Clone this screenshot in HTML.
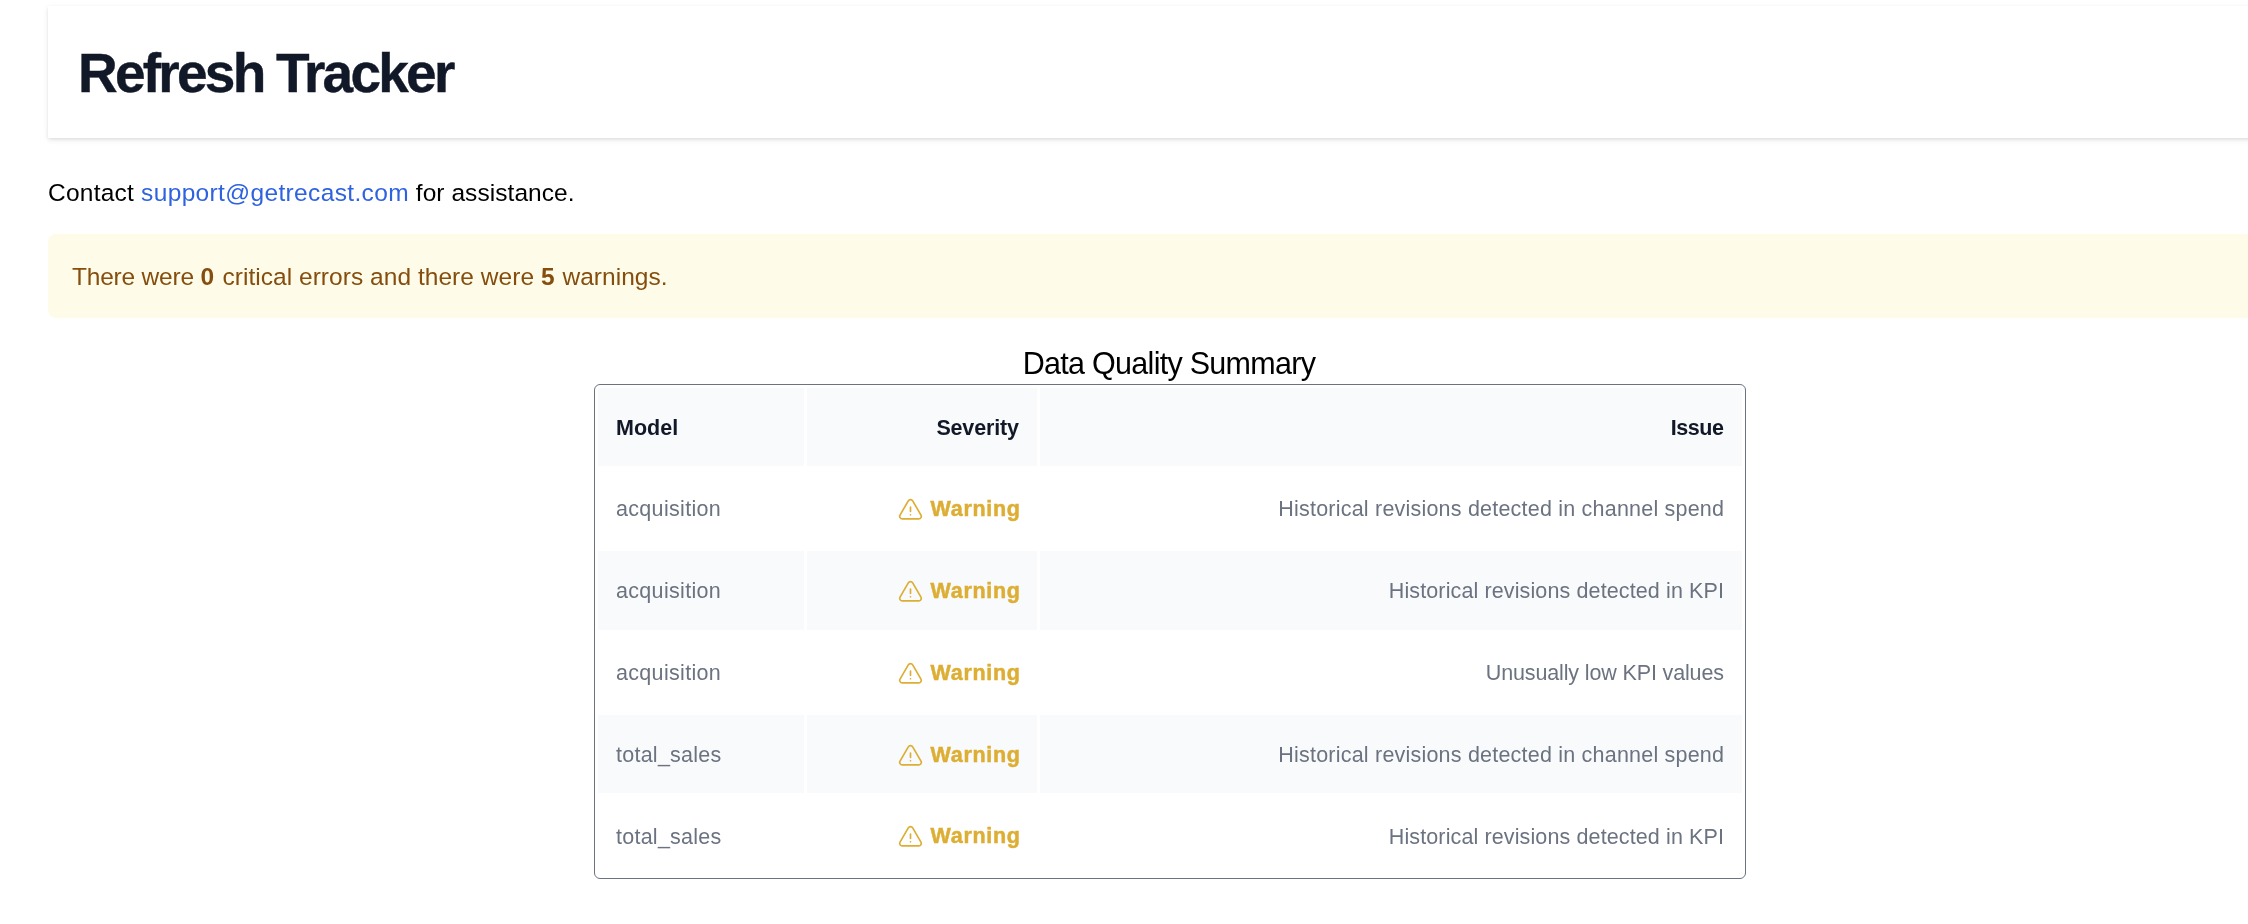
<!DOCTYPE html>
<html>
<head>
<meta charset="utf-8">
<style>
html,body{margin:0;padding:0;background:#fff;width:2248px;height:924px;overflow:hidden;}
body{font-family:"Liberation Sans",sans-serif;position:relative;-webkit-font-smoothing:antialiased;}
.gs{position:absolute;left:0;top:0;width:2248px;height:924px;will-change:transform;}
.card{position:absolute;left:48px;top:6px;width:2400px;height:132px;background:#fff;
  box-shadow:0 2px 5px 0 rgba(0,0,0,0.10),0 1px 3px 0 rgba(0,0,0,0.06);}
.title{position:absolute;left:30px;top:35px;font-size:55px;letter-spacing:-2.75px;-webkit-text-stroke:0.4px #111827;font-weight:700;color:#111827;white-space:nowrap;line-height:64px;}
.contact{position:absolute;left:48px;top:177.5px;font-size:24.5px;letter-spacing:0.23px;color:#000;white-space:nowrap;line-height:30px;}
.contact a{color:#2f62e0;text-decoration:none;letter-spacing:0.35px;}
.contact .c2{letter-spacing:0.06px;}
.alert{position:absolute;left:48px;top:234px;width:2400px;height:84px;background:#fefce8;border-radius:8px;}
.alert span.t{position:absolute;left:24px;top:27.5px;font-size:24.5px;letter-spacing:0.04px;color:#854d0e;white-space:nowrap;line-height:30px;}
.caption{position:absolute;left:0;width:2338px;top:346px;text-align:center;font-size:30.5px;letter-spacing:-0.72px;color:#000;line-height:34px;white-space:nowrap;}
.tbl{position:absolute;left:594px;top:384px;width:1152px;height:495px;box-sizing:border-box;border:1px solid #6b7280;border-radius:6px;}
.cell{position:absolute;box-sizing:border-box;white-space:nowrap;}
.cell .in{position:absolute;left:18px;right:18px;}
.r .in{text-align:right;}
.hd{background:#f9fafb;font-weight:700;color:#111827;font-size:21.5px;}
.gr{background:#f9fafb;}
.dt{color:#6b7280;font-size:21.5px;}
.warn{position:relative;display:inline-block;color:#ddae34;font-weight:700;font-size:21.5px;-webkit-text-stroke:0.5px currentColor;letter-spacing:0.7px;margin-right:-1.7px;}
.warn svg{position:absolute;left:-34px;top:27px;}
</style>
</head>
<body><div class="gs">
<div class="card"><div class="title">Refresh Tracker</div></div>
<div class="contact">Contact <a>support@getrecast.com</a><span class="c2"> for assistance.</span></div>
<div class="alert"><span class="t"><span style="letter-spacing:-0.2px">There were </span><b style="letter-spacing:1.4px">0</b> critical errors and there were <b style="letter-spacing:1px">5</b> warnings.</span></div>
<div class="caption">Data Quality Summary</div>
<div class="tbl">
<div class="cell hd" style="left:3px;top:3px;width:206px;height:78px"><div class="in" style="top:1.0px;line-height:78px"><span style="letter-spacing:0.0px">Model</span></div></div>
<div class="cell hd r" style="left:212px;top:3px;width:230px;height:78px"><div class="in" style="top:1.0px;line-height:78px"><span style="letter-spacing:-0.15px;margin-right:0.15px">Severity</span></div></div>
<div class="cell hd r" style="left:445px;top:3px;width:702px;height:78px"><div class="in" style="top:1.0px;line-height:78px"><span style="letter-spacing:-0.45px;margin-right:0.45px">Issue</span></div></div>
<div class="cell dt" style="left:3px;top:84px;width:206px;height:79px"><div class="in" style="top:1.0px;line-height:79px"><span style="letter-spacing:0.32px;margin-right:-0.32px">acquisition</span></div></div>
<div class="cell r" style="left:212px;top:84px;width:230px;height:79px"><div class="in" style="top:1.0px;line-height:79px"><span class="warn"><svg width="27" height="27" viewBox="0 0 24 24" fill="none" stroke="currentColor" stroke-width="1.5" stroke-linecap="round" stroke-linejoin="round"><path d="M12 9v3.75m-9.303 3.376c-.866 1.5.217 3.374 1.948 3.374h14.71c1.73 0 2.813-1.874 1.948-3.374L13.949 3.378c-.866-1.5-3.032-1.5-3.898 0L2.697 16.126ZM12 15.75h.007v.008H12v-.008Z"/></svg><span class="wt">Warning</span></span></div></div>
<div class="cell dt r" style="left:445px;top:84px;width:702px;height:79px"><div class="in" style="top:1.0px;line-height:79px"><span style="letter-spacing:0.21px;margin-right:-0.21px">Historical revisions detected in channel spend</span></div></div>
<div class="cell dt gr" style="left:3px;top:166px;width:206px;height:79px"><div class="in" style="top:1.0px;line-height:79px"><span style="letter-spacing:0.32px;margin-right:-0.32px">acquisition</span></div></div>
<div class="cell r gr" style="left:212px;top:166px;width:230px;height:79px"><div class="in" style="top:1.0px;line-height:79px"><span class="warn"><svg width="27" height="27" viewBox="0 0 24 24" fill="none" stroke="currentColor" stroke-width="1.5" stroke-linecap="round" stroke-linejoin="round"><path d="M12 9v3.75m-9.303 3.376c-.866 1.5.217 3.374 1.948 3.374h14.71c1.73 0 2.813-1.874 1.948-3.374L13.949 3.378c-.866-1.5-3.032-1.5-3.898 0L2.697 16.126ZM12 15.75h.007v.008H12v-.008Z"/></svg><span class="wt">Warning</span></span></div></div>
<div class="cell dt r gr" style="left:445px;top:166px;width:702px;height:79px"><div class="in" style="top:1.0px;line-height:79px"><span style="letter-spacing:0.12px;margin-right:-0.12px">Historical revisions detected in KPI</span></div></div>
<div class="cell dt" style="left:3px;top:248px;width:206px;height:79px"><div class="in" style="top:1.0px;line-height:79px"><span style="letter-spacing:0.32px;margin-right:-0.32px">acquisition</span></div></div>
<div class="cell r" style="left:212px;top:248px;width:230px;height:79px"><div class="in" style="top:1.0px;line-height:79px"><span class="warn"><svg width="27" height="27" viewBox="0 0 24 24" fill="none" stroke="currentColor" stroke-width="1.5" stroke-linecap="round" stroke-linejoin="round"><path d="M12 9v3.75m-9.303 3.376c-.866 1.5.217 3.374 1.948 3.374h14.71c1.73 0 2.813-1.874 1.948-3.374L13.949 3.378c-.866-1.5-3.032-1.5-3.898 0L2.697 16.126ZM12 15.75h.007v.008H12v-.008Z"/></svg><span class="wt">Warning</span></span></div></div>
<div class="cell dt r" style="left:445px;top:248px;width:702px;height:79px"><div class="in" style="top:1.0px;line-height:79px"><span style="letter-spacing:-0.14px;margin-right:0.14px">Unusually low KPI values</span></div></div>
<div class="cell dt gr" style="left:3px;top:330px;width:206px;height:78px"><div class="in" style="top:1.0px;line-height:78px"><span style="letter-spacing:0.25px;margin-right:-0.25px">total_sales</span></div></div>
<div class="cell r gr" style="left:212px;top:330px;width:230px;height:78px"><div class="in" style="top:1.0px;line-height:78px"><span class="warn"><svg width="27" height="27" viewBox="0 0 24 24" fill="none" stroke="currentColor" stroke-width="1.5" stroke-linecap="round" stroke-linejoin="round"><path d="M12 9v3.75m-9.303 3.376c-.866 1.5.217 3.374 1.948 3.374h14.71c1.73 0 2.813-1.874 1.948-3.374L13.949 3.378c-.866-1.5-3.032-1.5-3.898 0L2.697 16.126ZM12 15.75h.007v.008H12v-.008Z"/></svg><span class="wt">Warning</span></span></div></div>
<div class="cell dt r gr" style="left:445px;top:330px;width:702px;height:78px"><div class="in" style="top:1.0px;line-height:78px"><span style="letter-spacing:0.21px;margin-right:-0.21px">Historical revisions detected in channel spend</span></div></div>
<div class="cell dt" style="left:3px;top:411px;width:206px;height:79px"><div class="in" style="top:2.0px;line-height:79px"><span style="letter-spacing:0.25px;margin-right:-0.25px">total_sales</span></div></div>
<div class="cell r" style="left:212px;top:411px;width:230px;height:79px"><div class="in" style="top:1.0px;line-height:79px"><span class="warn"><svg width="27" height="27" viewBox="0 0 24 24" fill="none" stroke="currentColor" stroke-width="1.5" stroke-linecap="round" stroke-linejoin="round"><path d="M12 9v3.75m-9.303 3.376c-.866 1.5.217 3.374 1.948 3.374h14.71c1.73 0 2.813-1.874 1.948-3.374L13.949 3.378c-.866-1.5-3.032-1.5-3.898 0L2.697 16.126ZM12 15.75h.007v.008H12v-.008Z"/></svg><span class="wt">Warning</span></span></div></div>
<div class="cell dt r" style="left:445px;top:411px;width:702px;height:79px"><div class="in" style="top:2.0px;line-height:79px"><span style="letter-spacing:0.12px;margin-right:-0.12px">Historical revisions detected in KPI</span></div></div>
</div>
</div></body>
</html>
